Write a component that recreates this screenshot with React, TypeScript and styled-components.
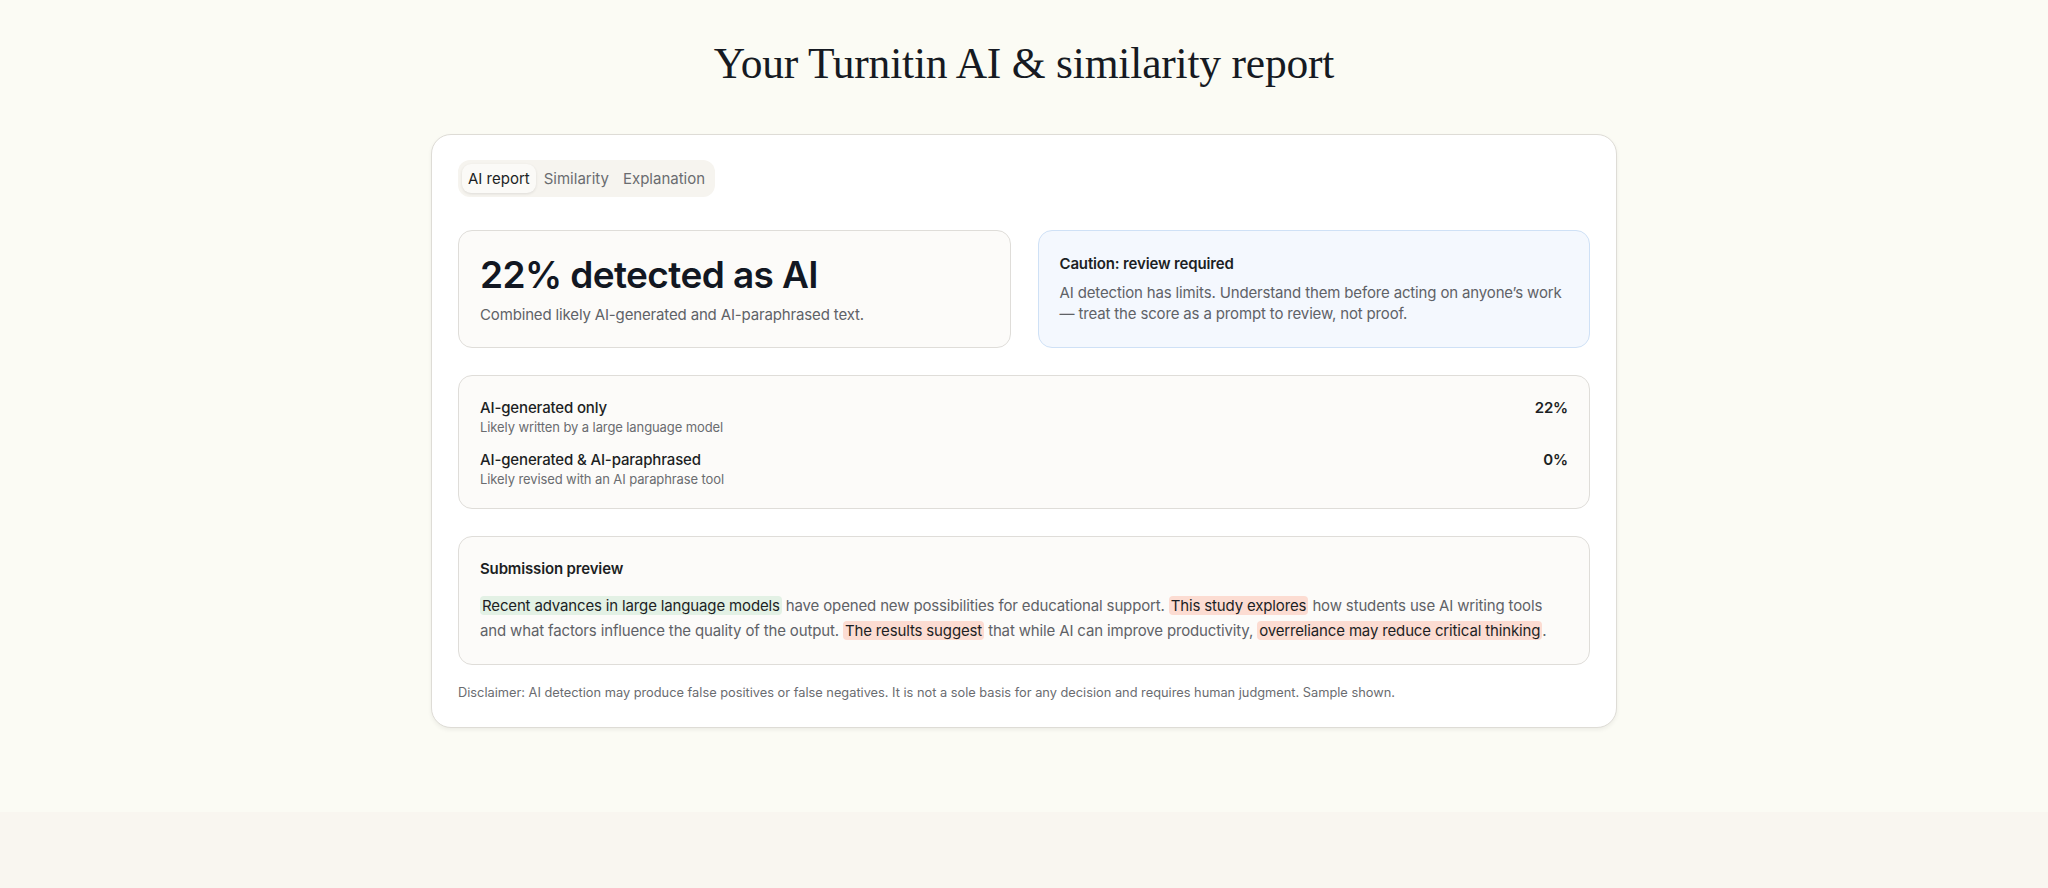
import { createGlobalStyle, styled } from "styled-components";

const GlobalStyle = createGlobalStyle`
  html, body {
    margin: 0;
    padding: 0;
    background: #f9f6f0;
  }
  body {
    font-family: Inter, "Noto Sans", "Liberation Sans", sans-serif;
    color: #1c1f24;
    -webkit-font-smoothing: antialiased;
  }
`;

const Page = styled.main`
  min-height: 812px;
  box-sizing: border-box;
  background: #fbfbf4;
  padding-top: 36px;
  display: flex;
  flex-direction: column;
  align-items: center;
`;

const Title = styled.h1`
  margin: 0 0 44px;
  font-family: "Liberation Serif", "DejaVu Serif", serif;
  font-weight: 400;
  font-size: 43.5px;
  line-height: 54px;
  color: #161a22;
  letter-spacing: -0.2px;
`;

const Card = styled.section`
  width: 1186px;
  box-sizing: border-box;
  background: #fff;
  border: 1.5px solid #dedcd6;
  border-radius: 20px;
  box-shadow: 0 2px 4px rgba(0, 0, 0, 0.06);
  padding: 25px 26px 26px;
`;

const Tabs = styled.div`
  display: inline-flex;
  align-items: center;
  gap: 2px;
  padding: 4px;
  background: #f6f4ef;
  border-radius: 12px;
`;

const Tab = styled.button<{ $active?: boolean }>`
  border: none;
  font-family: inherit;
  font-size: 15px;
  line-height: 19px;
  padding: 5px 6px;
  border-radius: 9px;
  cursor: pointer;
  color: ${(p) => (p.$active ? "#1c1f24" : "#6a6c70")};
  background: ${(p) => (p.$active ? "#fbfaf7" : "transparent")};
  box-shadow: ${(p) => (p.$active ? "0 1px 3px rgba(0,0,0,0.1)" : "none")};
`;

const TopRow = styled.div`
  display: grid;
  grid-template-columns: 1fr 1fr;
  gap: 27px;
  margin-top: 33px;
`;

const Panel = styled.div<{ $tone?: "blue" }>`
  box-sizing: border-box;
  border-radius: 14px;
  border: 1.5px solid ${(p) => (p.$tone === "blue" ? "#cfe1f6" : "#dfddd9")};
  background: ${(p) => (p.$tone === "blue" ? "#f4f8fe" : "#fcfbf9")};
  padding: 22px 21px;
  letter-spacing: -0.15px;
`;

const Score = styled.div`
  font-size: 37px;
  line-height: 44px;
  font-weight: 600;
  letter-spacing: -0.6px;
  color: #121722;
`;

const ScoreNote = styled.p`
  margin: 8px 0 0;
  font-size: 15px;
  line-height: 20px;
  color: #5f6267;
`;

const CautionTitle = styled.div`
  font-size: 15px;
  line-height: 20px;
  font-weight: 600;
  color: #1c1f24;
  margin-top: 1px;
`;

const CautionText = styled.p`
  margin: 8px 0 0;
  font-size: 15px;
  line-height: 21px;
  color: #5f6267;
`;

const Breakdown = styled(Panel)`
  margin-top: 27px;
  padding: 22px 21px 20px;
  display: flex;
  flex-direction: column;
  gap: 14px;
`;

const Row = styled.div`
  display: flex;
  justify-content: space-between;
  align-items: flex-start;
`;

const RowText = styled.div`
  display: flex;
  flex-direction: column;
  gap: 1px;
`;

const RowLabel = styled.div`
  font-size: 15px;
  line-height: 20px;
  font-weight: 500;
  color: #1c1f24;
`;

const RowSub = styled.div`
  font-size: 13px;
  line-height: 17px;
  letter-spacing: -0.1px;
  color: #6a6c70;
`;

const RowValue = styled.div`
  font-size: 15px;
  line-height: 20px;
  font-weight: 600;
  color: #1c1f24;
`;

const Preview = styled(Panel)`
  margin-top: 27px;
  padding: 22px 21px 21px;
`;

const PreviewTitle = styled.div`
  font-size: 15px;
  line-height: 20px;
  font-weight: 600;
  color: #1c1f24;
`;

const PreviewText = styled.p`
  margin: 14px 0 0;
  font-size: 15px;
  line-height: 25px;
  color: #5f6267;
`;

const Mark = styled.mark<{ $kind: "green" | "red" }>`
  color: #1c1f24;
  background: ${(p) => (p.$kind === "green" ? "#e3f1e5" : "#fcdcd2")};
  border-radius: 4px;
  padding: 0 2px;
`;

const Disclaimer = styled.p`
  margin: 20px 0 0;
  font-size: 12.8px;
  line-height: 16px;
  color: #6a6c70;
`;

const rows = [
  { label: "AI-generated only", sub: "Likely written by a large language model", value: "22%" },
  { label: "AI-generated & AI-paraphrased", sub: "Likely revised with an AI paraphrase tool", value: "0%" },
];

export default function App() {
  return (
    <>
      <GlobalStyle />
      <Page>
        <Title>Your Turnitin AI &amp; similarity report</Title>
        <Card>
          <Tabs>
            <Tab $active>AI report</Tab>
            <Tab>Similarity</Tab>
            <Tab>Explanation</Tab>
          </Tabs>

          <TopRow>
            <Panel>
              <Score>22% detected as AI</Score>
              <ScoreNote>Combined likely AI-generated and AI-paraphrased text.</ScoreNote>
            </Panel>
            <Panel $tone="blue">
              <CautionTitle>Caution: review required</CautionTitle>
              <CautionText>
                AI detection has limits. Understand them before acting on anyone’s work
                — treat the score as a prompt to review, not proof.
              </CautionText>
            </Panel>
          </TopRow>

          <Breakdown>
            {rows.map((r) => (
              <Row key={r.label}>
                <RowText>
                  <RowLabel>{r.label}</RowLabel>
                  <RowSub>{r.sub}</RowSub>
                </RowText>
                <RowValue>{r.value}</RowValue>
              </Row>
            ))}
          </Breakdown>

          <Preview>
            <PreviewTitle>Submission preview</PreviewTitle>
            <PreviewText>
              <Mark $kind="green">Recent advances in large language models</Mark> have opened new
              possibilities for educational support. <Mark $kind="red">This study explores</Mark> how
              students use AI writing tools and what factors influence the quality of the output.{" "}
              <Mark $kind="red">The results suggest</Mark> that while AI can improve productivity,{" "}
              <Mark $kind="red">overreliance may reduce critical thinking</Mark>.
            </PreviewText>
          </Preview>

          <Disclaimer>
            Disclaimer: AI detection may produce false positives or false negatives. It is not a sole
            basis for any decision and requires human judgment. Sample shown.
          </Disclaimer>
        </Card>
      </Page>
    </>
  );
}
